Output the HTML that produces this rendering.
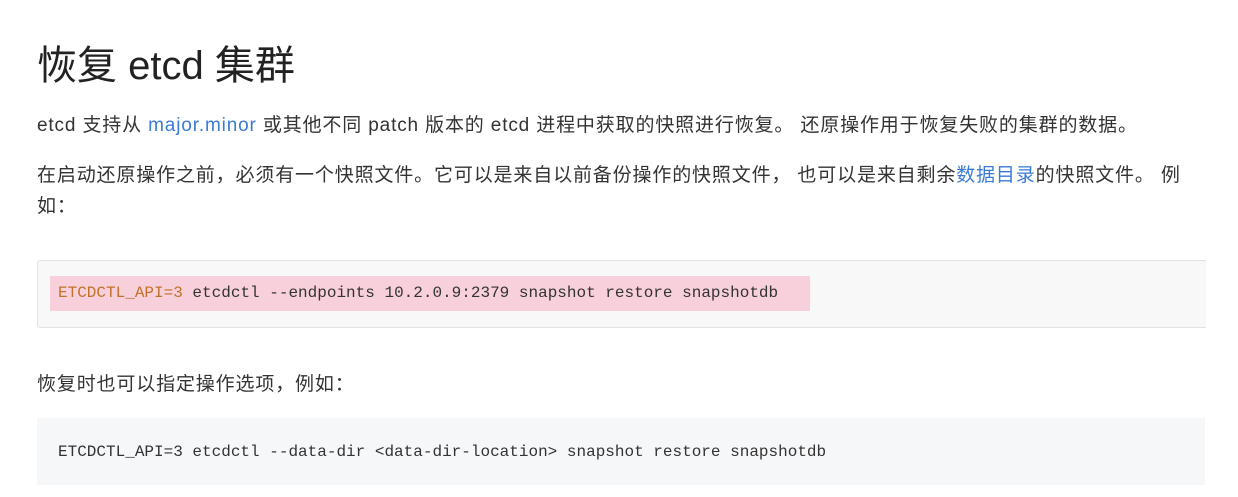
<!DOCTYPE html>
<html><head><meta charset="utf-8"><style>
body{margin:0;background:#fff;width:1238px;height:497px;overflow:hidden;position:relative;font-family:"Liberation Sans","Noto Sans CJK SC",sans-serif;color:#333;}
.a{position:absolute;white-space:nowrap;}
h1{position:absolute;left:37px;top:38px;margin:0;font-weight:normal;font-size:40px;line-height:56px;color:#222;font-family:"Liberation Sans","Noto Sans CJK SC",sans-serif;}
.p{font-size:19px;line-height:31px;letter-spacing:0.85px;}
a{color:#3a7bd5;text-decoration:none;}
.code{font-family:"Liberation Mono","DejaVu Sans Mono",monospace;font-size:16px;color:#333;}
</style></head><body>
<h1>恢复 etcd 集群</h1>
<div class="a p" style="left:37px;top:110px;">etcd 支持从 <a>major.minor</a> 或其他不同 patch 版本的 etcd 进程中获取的快照进行恢复。 还原操作用于恢复失败的集群的数据。</div>
<div class="a p" style="left:37px;top:160px;">在启动还原操作之前，必须有一个快照文件。它可以是来自以前备份操作的快照文件， 也可以是来自剩余<a>数据目录</a>的快照文件。 例</div>
<div class="a p" style="left:37px;top:191px;">如：</div>
<div class="a" style="left:37px;top:260px;width:1168px;height:66px;background:#f8f8f8;border:1px solid #e3e3e3;border-right:none;border-radius:3px 0 0 3px;"></div>
<div class="a" style="left:50px;top:276px;width:760px;height:35px;background:#f8d0dc;"></div>
<div class="a code" style="left:58px;top:284px;"><span style="color:#c0722a">ETCDCTL_API=3</span> etcdctl --endpoints 10.2.0.9:2379 snapshot restore snapshotdb</div>
<div class="a p" style="left:37px;top:369px;">恢复时也可以指定操作选项，例如：</div>
<div class="a" style="left:37px;top:418px;width:1168px;height:67px;background:#f6f7f9;"></div>
<div class="a code" style="left:58px;top:443px;">ETCDCTL_API=3 etcdctl --data-dir &lt;data-dir-location&gt; snapshot restore snapshotdb</div>
</body></html>
